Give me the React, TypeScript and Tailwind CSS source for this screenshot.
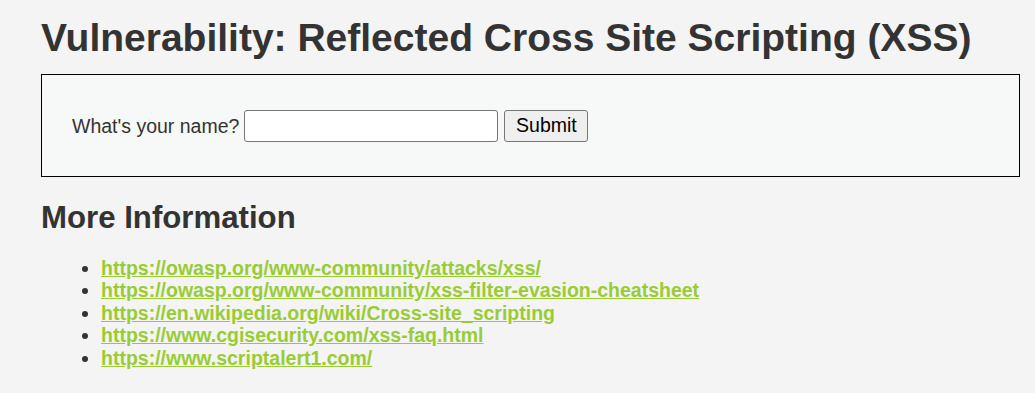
import React from 'react';

const links = [
  'https://owasp.org/www-community/attacks/xss/',
  'https://owasp.org/www-community/xss-filter-evasion-cheatsheet',
  'https://en.wikipedia.org/wiki/Cross-site_scripting',
  'https://www.cgisecurity.com/xss-faq.html',
  'https://www.scriptalert1.com/',
];

export default function App() {
  return (
    <div className="min-h-[393px] bg-[#f4f4f4] text-[#333] font-['Liberation_Sans',Arial,sans-serif] text-[19.5px] pl-[41px] pr-[15px] pt-[15px]">
      <h1 className="text-[39px] leading-[45px] font-bold">Vulnerability: Reflected Cross Site Scripting (XSS)</h1>

      <div className="mt-[14px] h-[103px] border border-black bg-[#f7f8f8] flex items-center pl-[30px]">
        <form className="flex items-center" onSubmit={(e) => e.preventDefault()}>
          <label className="text-[#333] leading-[22px]">What's your name?</label>
          <input
            type="text"
            className="ml-[5px] w-[254px] h-[32px] bg-white border border-[#767676] rounded-[3px] px-1"
          />
          <button className="ml-[6px] h-[32px] w-[84px] bg-[#efefef] border border-[#767676] rounded-[3px] text-black">
            Submit
          </button>
        </form>
      </div>

      <h2 className="mt-[23px] text-[31.2px] leading-[36px] font-bold">More Information</h2>

      <ul className="mt-[21px] pl-[60px] list-disc leading-[22.4px] font-bold">
        {links.map((l) => (
          <li key={l}>
            <a href={l} className="text-[#99cc33] underline">{l}</a>
          </li>
        ))}
      </ul>
    </div>
  );
}
